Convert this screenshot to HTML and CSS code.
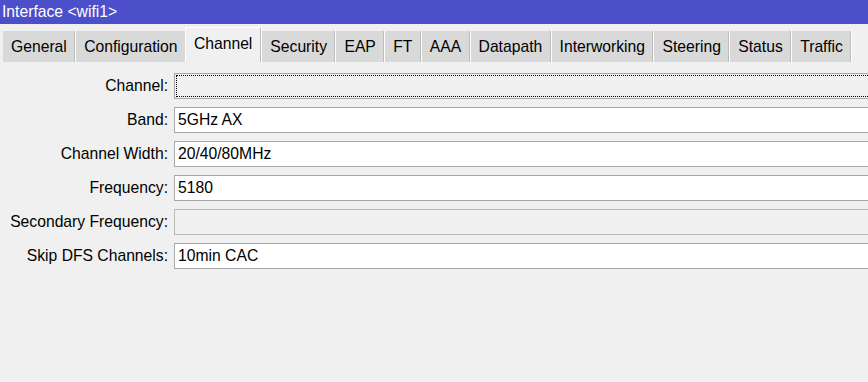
FILE: index.html
```html
<!DOCTYPE html>
<html>
<head>
<meta charset="utf-8">
<link rel="stylesheet" href="styles.css">
</head>
<body>
<div class="window">
  <div class="titlebar">Interface &lt;wifi1&gt;</div>
  <div class="tabs">
    <div class="tab">General</div>
    <div class="tab">Configuration</div>
    <div class="tab active">Channel</div>
    <div class="tab">Security</div>
    <div class="tab">EAP</div>
    <div class="tab">FT</div>
    <div class="tab">AAA</div>
    <div class="tab">Datapath</div>
    <div class="tab">Interworking</div>
    <div class="tab">Steering</div>
    <div class="tab">Status</div>
    <div class="tab">Traffic</div>
  </div>
  <div class="form">
    <div class="label">Channel:</div>
    <div class="field focused"><span class="focus-ring"></span></div>
    <div class="label">Band:</div>
    <div class="field">5GHz AX</div>
    <div class="label">Channel Width:</div>
    <div class="field">20/40/80MHz</div>
    <div class="label">Frequency:</div>
    <div class="field">5180</div>
    <div class="label">Secondary Frequency:</div>
    <div class="field disabled"></div>
    <div class="label">Skip DFS Channels:</div>
    <div class="field">10min CAC</div>
  </div>
</div>
</body>
</html>
```
FILE: styles.css
```css
html, body {
  margin: 0;
  padding: 0;
  background: #f0f0f0;
  overflow: hidden;
}
body {
  width: 868px;
  height: 382px;
  font-family: "Liberation Sans", Arial, sans-serif;
  font-size: 15.7px;
  color: #000;
}
.window {
  width: 868px;
  height: 382px;
  overflow: hidden;
}
.titlebar {
  height: 24px;
  line-height: 23px;
  background: #4b4fc9;
  color: #fff;
  padding-left: 2px;
  white-space: nowrap;
}
.tabs {
  display: flex;
  align-items: flex-end;
  height: 38px;
  padding-left: 3px;
  box-sizing: border-box;
}
.tab {
  height: 31px;
  line-height: 32px;
  background: #d9d9d9;
  padding: 0 7.4px 0 8px;
  border-right: 1px solid #bcbcbc;
  box-shadow: 1px 0 0 #ffffff;
  margin-right: 1px;
  white-space: nowrap;
  box-sizing: border-box;
}
.tab.active {
  height: 35px;
  line-height: 32px;
  background: #f0f0f0;
  border-top: 1px solid #ffffff;
  border-left: 1px solid #ffffff;
  padding: 0 8px 0 8px;
  margin-left: -2px;
}
.form {
  display: grid;
  grid-template-columns: 168px 720px;
  column-gap: 6px;
  row-gap: 8px;
  padding-top: 11px;
  align-items: center;
}
.label {
  text-align: right;
  white-space: nowrap;
}
.field {
  height: 26px;
  line-height: 24px;
  box-sizing: border-box;
  border: 1px solid #a8a8a8;
  background: #ffffff;
  padding-left: 3px;
  white-space: nowrap;
  position: relative;
}
.field.disabled {
  background: #f0f0f0;
  border-color: #b8b8b8;
}
.field.focused {
  background: #f0f0f0;
}
.focus-ring {
  position: absolute;
  left: 1px;
  top: 1px;
  right: 1px;
  bottom: 1px;
  border: 1px dotted #000;
}
```
